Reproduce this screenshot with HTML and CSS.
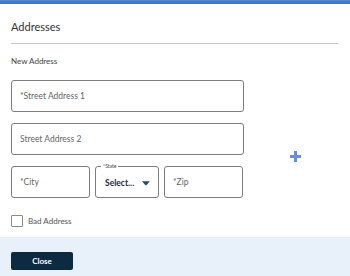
FILE: index.html
```html
<!DOCTYPE html>
<html lang="en">
<head>
    <meta charset="UTF-8">
    <title>Addresses</title>
    <link rel="stylesheet" href="styles.css">
</head>
<body>
    <div class="topbar"></div>

    <div class="modal-header">
        <h2>Addresses</h2>
    </div>

    <div class="modal-body">
        <h4>New Address</h4>
        <div class="address-form">
            <div class="fields">
                <div class="field"><span class="placeholder">*Street Address 1</span></div>
                <div class="field"><span class="placeholder">Street Address 2</span></div>
                <div class="row">
                    <div class="field city"><span class="placeholder">*City</span></div>
                    <div class="field state">
                        <span class="float-label">*State</span>
                        <span class="select-text">Select...</span>
                        <svg class="caret" width="9" height="5" viewBox="0 0 9 5"><path d="M0 0h9L4.5 5z" fill="#1d4f78"/></svg>
                    </div>
                    <div class="field zip"><span class="placeholder">*Zip</span></div>
                </div>
            </div>
            <div class="add-col">
                <svg width="11" height="11" viewBox="0 0 11 11"><path d="M4 0h3v4h4v3H7v4H4V7H0V4h4z" fill="#5b93df"/></svg>
            </div>
        </div>
        <label class="checkbox"><span class="box"></span>Bad Address</label>
    </div>

    <div class="modal-footer">
        <button>Close</button>
    </div>
</body>
</html>
```

FILE: styles.css
```css
body {
    margin: 0;
    font-family: 'Lato', 'Liberation Sans', sans-serif;
    background-color: #ffffff;
    color: #333;
    width: 350px;
    height: 276px;
    overflow: hidden;
}

.topbar {
    height: 4px;
    background-color: #3a78d8;
    border-top: 1px solid #5a86c9;
    box-sizing: border-box;
}

.modal-header {
    margin: 0 12px 0 11px;
    padding: 16px 0 9px;
    border-bottom: 1px solid #c8c8c8;
}

.modal-header h2 {
    margin: 0;
    font-size: 11px;
    line-height: 14px;
    font-weight: 400;
    color: #333;
}

.modal-body {
    padding: 0 11px;
}

.modal-body h4 {
    margin: 12px 0 14px;
    font-size: 8px;
    line-height: 10px;
    font-weight: 400;
    color: #444;
}

.address-form {
    display: flex;
}

.fields {
    width: 233px;
    display: flex;
    flex-direction: column;
    gap: 11px;
}

.field {
    position: relative;
    height: 32px;
    box-sizing: border-box;
    border: 1px solid #7d7d7d;
    border-radius: 3px;
    display: flex;
    align-items: center;
    padding: 0 8px;
}

.placeholder {
    font-size: 8.5px;
    color: #666;
}

.row {
    display: flex;
    gap: 5px;
}

.city {
    width: 79px;
}

.state {
    width: 64px;
    padding-left: 9px;
}

.zip {
    width: 79px;
}

.float-label {
    position: absolute;
    top: -4px;
    left: 5px;
    padding: 0 2px;
    background-color: #fff;
    font-size: 5px;
    line-height: 7px;
    color: #444;
}

.select-text {
    font-size: 8.5px;
    font-weight: 700;
    color: #1b2a38;
    margin-top: 1px;
}

.caret {
    margin-left: 8px;
    margin-top: 2px;
}

.add-col {
    flex: 1;
    padding-top: 66px;
    padding-left: 46px;
}

.checkbox {
    display: flex;
    align-items: center;
    margin-top: 17px;
    height: 12px;
    font-size: 8px;
    color: #555;
}

.checkbox .box {
    width: 12px;
    height: 12px;
    box-sizing: border-box;
    border: 1px solid #8a8a8a;
    border-radius: 1px;
    margin-right: 5px;
}

.modal-footer {
    margin-top: 10px;
    height: 39px;
    background-color: #e8f0fa;
    padding: 11px 11px 0;
    box-sizing: border-box;
}

.modal-footer button {
    width: 62px;
    height: 18px;
    background-color: #0c2b40;
    color: #fff;
    border: none;
    border-radius: 2px;
    font-family: 'Lato', 'Liberation Sans', sans-serif;
    font-size: 8px;
    font-weight: 700;
    padding: 0;
}
```
